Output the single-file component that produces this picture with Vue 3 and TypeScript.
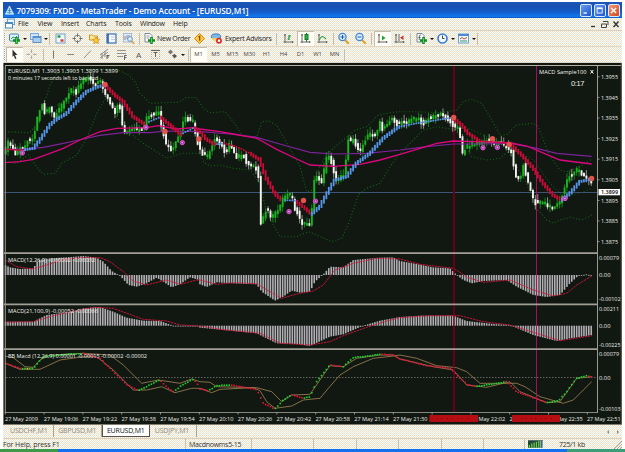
<script setup lang="ts">
type Pt = [number, number]
type Item = { kind: 'icon' | 'text' | 'sep' | 'tf'; w: number; icon?: string; text?: string; on?: boolean }

const menus = ['File', 'View', 'Insert', 'Charts', 'Tools', 'Window', 'Help']

const drop = '<path d="M17 8h4l-2 2z" fill="#111"/>'
const plus = '<path d="M10.5 7v7M7 10.5h7" stroke="#158a25" stroke-width="2.6"/><path d="M10.5 8v5" stroke="#4fd05a" stroke-width="1"/>'
const axes = '<path d="M5 4v9M3.500 12h10" stroke="#666" fill="none"/><path d="M4 5h2M12.500 11v2" stroke="#666"/>'
const icons: Record<string, string> = {
  newChart: '<rect x="3.500" y="4" width="9" height="7" rx="1" fill="#d8efff" stroke="#4a86a8"/><path d="M5 9l2-2 2 1 2-2" stroke="#3a9a50" fill="none"/>' + plus + drop,
  profiles: '<rect x="3.500" y="3.500" width="8" height="6" fill="#cfe6fa" stroke="#7ba6d2"/><rect x="6" y="6.500" width="8" height="6" fill="#a8cdf2" stroke="#5b90c6"/><path d="M6 7.500h8" stroke="#5b90c6"/>' + drop,
  market: '<rect x="4" y="4" width="9" height="9" fill="#eef7ff" stroke="#78a0c0"/><path d="M5.500 6.500h3" stroke="#2a9a3c" stroke-width="2.400"/><path d="M8.500 10.500h3" stroke="#d04030" stroke-width="2.400"/>',
  target: '<circle cx="8.500" cy="8.500" r="3.300" fill="none" stroke="#888"/><path d="M8.500 3.500v3.200M8.500 10.300v3.200M3.500 8.500h3.200M10.300 8.500h3.200" stroke="#666"/>',
  folder: '<path d="M3.500 5h3l1 1h4v4h-8z" fill="#ffe79a" stroke="#c99a28"/><path d="M10 7l1.300 2 2.400.4-1.700 1.700.4 2.400-2.400-1-2.300 1 .5-2.400-1.700-1.700 2.300-.4z" fill="#ffc62d" stroke="#b97a10" stroke-width=".6"/>',
  terminal: '<rect x="4" y="4" width="9" height="9" fill="#f3f9ff" stroke="#3b6fb5" stroke-width="1.200"/><path d="M5 4v9" stroke="#2b5dae" stroke-width="1.600"/><path d="M8 7h4M8 9.500h4" stroke="#ccd"/>',
  tester: '<rect x="3.500" y="3.500" width="8" height="8.500" fill="#e4eefa" stroke="#a5b9d0"/><path d="M5 10V6M7 9V5M9 8V5" stroke="#88a"/><circle cx="10" cy="9" r="2.400" fill="#d6f0ff" stroke="#6f92bd"/><path d="M11.700 11l2.600 2.700" stroke="#d0a040" stroke-width="1.500"/>',
  order: '<path d="M4 3.500h5l2 2V12H4z" fill="#fbfdff" stroke="#7c8aa0"/><path d="M5.500 6h3M5.500 8h3" stroke="#99a"/>' + plus,
  editor: '<path d="M8.500 3.500l5 5-5 5-5-5z" fill="#ffc94a" stroke="#d78a14"/><path d="M7.500 7l1.200-.7V10.800" stroke="#7a4300" stroke-width="1.200" fill="none"/>',
  expert: '<ellipse cx="8" cy="6.500" rx="4.700" ry="2.600" fill="#7eb8e8" stroke="#3a75ad"/><path d="M4 8c1 4 5 4 8 0z" fill="#f2cf5a"/><circle cx="11" cy="10.700" r="2.900" fill="#d82020"/><rect x="9.800" y="9.500" width="2.400" height="2.400" fill="#fff"/>',
  bars: axes + '<path d="M9 5v5M7.500 9H9M9 6h2" stroke="#18943a" stroke-width="1.200"/>',
  candles: axes + '<path d="M9.500 3v9" stroke="#127a24"/><rect x="8" y="4.500" width="3" height="5" fill="#2db14a" stroke="#127a24"/>',
  line: axes + '<path d="M5 10c3-5 4-4 7-1" stroke="#23a044" fill="none" stroke-width="1.200"/>',
  zoomIn: '<path d="M10 10l3.800 3.800" stroke="#dba52e" stroke-width="2.200"/><circle cx="7.500" cy="7" r="3.600" fill="#d8efff" stroke="#4787d0" stroke-width="1.300"/><path d="M5.500 7h4M7.500 5v4" stroke="#245da5"/>',
  zoomOut: '<path d="M10 10l3.800 3.800" stroke="#dba52e" stroke-width="2.200"/><circle cx="7.500" cy="7" r="3.600" fill="#d8efff" stroke="#4787d0" stroke-width="1.300"/><path d="M5.500 7h4" stroke="#245da5"/>',
  scroll: axes + '<path d="M8 5.500v5l3.500-2.500z" fill="#1ba63a"/>',
  shift: axes + '<path d="M8 4v7" stroke="#666"/><path d="M12.500 5.500v4.500l-3.500-2.200z" fill="#c62f2f"/>',
  indicators: '<path d="M4 3.500h5l2 2V12H4z" fill="#f4fbff" stroke="#7c8a90"/><path d="M7.800 5c-1.500-.5-1.500 1-1.500 5M5.500 7.500h2" stroke="#445" fill="none" stroke-width=".8"/>' + plus + drop,
  clock: '<circle cx="8.500" cy="8.500" r="4.500" fill="#f3faff" stroke="#3f7fd0" stroke-width="1.700"/><path d="M8.500 5.500v3h2" stroke="#444" fill="none"/>' + drop,
  template: '<rect x="3.500" y="4" width="10" height="9" fill="#eaf6ff" stroke="#6f9fd2"/><path d="M3 5h11" stroke="#4f8ad0" stroke-width="2"/><path d="M5 9l2-1.500L9 9l3-1.500" stroke="#c05030" fill="none"/><path d="M5 11h7" stroke="#3a9a50"/>' + drop,
  cursor: '<path d="M6.500 3.500l5 5.500H9l1.500 3.500-1.500.5L7.800 9.500 6.500 11z" fill="#333"/>',
  cross: '<path d="M8.500 3.500v3.500M8.500 9.500V13M3.500 8.300H7M10 8.300h3.500" stroke="#aaa" stroke-width="1.200"/>',
  vline: '<path d="M8.500 4.500v8" stroke="#777"/>',
  hline: '<path d="M5 8.500h7" stroke="#888"/>',
  trend: '<path d="M5 12l7-7.500" stroke="#888"/>',
  channel: '<path d="M4 9l8-6M4 12l8-6M6 13V7M9 11V5" stroke="#777" stroke-width=".8"/><path d="M11 13v-4M11 9.500h2.500M11 11h2" stroke="#555" stroke-width=".9"/>',
  fibo: '<path d="M4 4.500h9M4 7.500h9M4 10.500h6" stroke="#888" stroke-width=".9"/><path d="M11.500 14v-4.500h2.300M11.500 11.500h2" stroke="#555" fill="none" stroke-width=".9"/>',
  textA: '<text x="8.500" y="11.600" font-family="Liberation Sans" font-size="8" text-anchor="middle" fill="#555">A</text>',
  label: '<rect x="4.500" y="4" width="8" height="8.500" fill="none" stroke="#aaa" stroke-dasharray="1 1"/><path d="M4 4.500h9M6.500 6.500h4M8.500 6.500V11" stroke="#666"/>',
  arrows: '<path d="M4 6l2.500-2.500L9 6 6.500 8.500z" fill="#777"/><path d="M8 9.500l2.500-1.500L13 10l-2.500 2.500z" fill="#555"/>' + drop,
}

const I = (icon: string, w = 17, on = false): Item => ({ kind: 'icon', icon, w, on })
const S = (w: number): Item => ({ kind: 'sep', w })
const T = (text: string, w: number): Item => ({ kind: 'text', text, w })
const bar1: Item[] = [
  I('newChart', 20.5), I('profiles', 21), S(4.5), I('market'), I('target'), I('folder'), I('terminal'), I('tester'), S(4),
  I('order', 16), T('New Order', 34), I('editor'), I('expert'), T('Expert Advisors', 47.5), S(7.5),
  I('bars'), I('candles', 17, true), I('line'), S(4), I('zoomIn'), I('zoomOut'), S(5), I('scroll', 17, true), I('shift'), S(4.5),
  I('indicators', 21), I('clock', 21), I('template', 21), S(4),
]
const bar2: Item[] = [
  I('cursor', 17, true), I('cross', 18), S(4), I('vline'), I('hline'), I('trend'), I('channel'), I('fibo'), I('textA'), I('label'), I('arrows', 22), S(4),
  ...['M1', 'M5', 'M15', 'M30', 'H1', 'H4', 'D1', 'W1', 'MN'].map((t, i): Item => ({ kind: 'tf', text: t, w: 17, on: i === 0 })), S(2),
]

/* Curves are stored as flat x,y lists in thirds of a pixel from a panel origin. */
const tr = (ox: number, oy: number, s: string): Pt[] =>
  s.split(' ').map((p) => {
    const [x, y] = p.split(',').map(Number)
    return [ox + x / 3, oy + y / 3]
  })
const main = (a: string, b: string, c: string) => [...tr(0, 60, a), ...tr(200, 60, b), ...tr(400, 60, c)]
const sub = (a: string, b: string, c: string) => [...tr(0, 245, a), ...tr(200, 245, b), ...tr(400, 245, c)]
const line = (p: Pt[]) => p.map(([x, y]) => x.toFixed(1) + ',' + y.toFixed(1)).join(' ')

const at = (pts: Pt[], x: number) => {
  if (x <= pts[0][0]) return pts[0][1]
  for (let i = 1; i < pts.length; i++) {
    const [x1, y1] = pts[i]
    if (x <= x1) {
      const [x0, y0] = pts[i - 1]
      return x1 === x0 ? y1 : y0 + ((y1 - y0) * (x - x0)) / (x1 - x0)
    }
  }
  return pts[pts.length - 1][1]
}

const STEP = 2.43
const xs = Array.from({ length: 242 }, (_, i) => 5.6 + i * STEP)
const rnd = (i: number, k: number) => {
  const v = Math.sin(i * 12.9898 + k * 78.233) * 43758.5453
  return v - Math.floor(v)
}

const price = main(
  '15,285 20,245 35,262 50,285 58,262 70,272 80,245 95,240 105,210 113,170 125,130 135,160 148,140 163,172 178,150 190,130 200,110 215,90 228,100 240,75 255,60 270,55 285,75 300,60 306,80 320,115 345,155 358,130 366,190 375,218 392,210 412,210 430,205 442,168 475,155 483,195 497,250 515,272 532,235 545,210 550,175 577,180 590,240 602,277 622,292',
  '20,290 32,265 46,235 60,250 75,278 90,252 110,295 130,285 145,320 165,318 178,355 181,490 190,470 200,445 216,475 240,440 250,412 275,405 283,445 295,465 305,490 328,492 338,430 342,365 350,355 365,370 378,300 390,290 400,340 410,365 430,345 440,290 443,240 460,245 480,278 490,250 510,220 530,232 537,175 548,210 575,175 590,192',
  '2,190 50,175 70,192 90,172 120,165 148,178 160,200 178,208 185,285 200,262 220,250 240,250 260,240 290,250 320,258 335,280 345,355 360,362 370,310 385,375 403,428 430,425 455,447 480,425 495,375 510,345 530,330 545,345 568,358 574,370 577,395',
)
const candles = xs
  .filter((x) => x < 594)
  .map((x, i) => {
    const o = at(price, x - STEP) + (rnd(i, 1) - 0.5) * 4
    const c = at(price, x) + (rnd(i, 2) - 0.5) * 4
    const top = Math.min(o, c) - 1
    const h = Math.max(2.5, Math.abs(o - c) + 1.5)
    return { x, top, h, hi: top - rnd(i, 3) * 6, lo: top + h + rnd(i, 4) * 5, up: c < o }
  })

const slow = main('15,308 60,305 100,298 150,280 190,265 240,240 300,215 350,205 440,203 475,197 530,207 580,203', '0,207 60,215 100,222 170,235 230,268 290,297 330,315 400,319 480,313 540,300', '0,283 60,265 110,250 160,243 330,248 380,258 420,275 480,300 575,312')
const purple = main('15,268 70,268 130,262 190,250 250,237 300,226 370,218 450,218 500,213', '0,215 90,222 170,232 250,255 330,277 400,282 500,280', '0,270 80,260 160,252 240,252 330,250 400,263 470,280 575,289')
const upper = main('15,215 90,218 110,195 130,140 150,75 170,40 250,28 350,28 385,45 405,65 420,100 450,130 535,127 560,112 590,113', '10,145 30,158 75,155 100,185 130,230 170,230 185,185 205,182 230,195 250,230 300,320 320,395 340,390 350,340 375,290 400,265 430,240 465,210 500,200 535,165 570,158', '0,155 50,155 120,158 170,150 190,125 215,118 245,130 270,170 300,225 320,225 350,195 400,190 415,200 430,240 450,290 480,330 500,335 540,320 575,297')
const lower = main('15,305 50,310 85,285 110,320 130,343 165,340 185,310 230,285 260,235 290,160 320,110 345,160 370,205 430,250 500,295 545,280', '0,280 12,308 30,318 60,315 100,325 150,330 180,370 200,460 240,530 290,530 325,515 350,525 395,545 425,535 450,480 475,405 500,385 540,370 570,320', '0,280 40,240 70,210 110,200 170,210 190,250 215,290 260,300 300,295 330,270 350,320 380,370 405,440 440,480 460,490 480,480 510,472 545,480 575,465')
const middle = main('90,215 130,165 180,130 220,95 260,60', '100,250 180,300 250,370 330,420', '170,190 215,210 300,245 400,300 450,370 490,410 540,400 575,385')
const middleParts = [middle.slice(0, 5), middle.slice(9)]

const ribbonData: { c: 'up' | 'dn'; thin?: boolean; p: Pt[] }[] = [
  { c: 'dn', thin: true, p: tr(0, 60, '15,268 70,271') },
  { c: 'up', p: tr(0, 60, '70,270 100,265 120,240 150,195 170,178 200,160 230,125 260,95 290,82 312,75') },
  { c: 'dn', p: tr(0, 60, '315,75 345,105 370,125 400,170 438,195') },
  { c: 'up', thin: true, p: tr(0, 60, '440,188 480,172') },
  { c: 'dn', p: tr(0, 60, '482,172 510,195 545,225') },
  { c: 'up', thin: true, p: tr(0, 60, '545,222 582,203') },
  { c: 'dn', p: tr(0, 60, '582,203 600,215 620,238 645,253') },
  { c: 'up', thin: true, p: tr(200, 60, '45,253 72,250') },
  { c: 'dn', thin: true, p: tr(200, 60, '72,250 110,260 150,280') },
  { c: 'dn', p: tr(200, 60, '150,280 180,300 200,355 225,400 245,420') },
  { c: 'up', thin: true, p: tr(200, 60, '248,420 285,422') },
  { c: 'dn', p: tr(200, 60, '285,422 310,440 335,462') },
  { c: 'up', p: tr(200, 60, '335,462 360,440 385,395 405,360 440,350 470,310 510,280 550,235 590,205 600,200') },
  { c: 'up', thin: true, p: tr(400, 60, '0,200 50,190 100,182 155,173') },
  { c: 'dn', p: tr(400, 60, '158,172 185,195 205,220 235,240 245,242') },
  { c: 'dn', thin: true, p: tr(400, 60, '245,243 330,250') },
  { c: 'dn', p: tr(400, 60, '330,250 370,290 400,325 430,370 460,405 485,420') },
  { c: 'up', p: tr(400, 60, '485,420 510,400 540,365 575,357') },
]
const ribbon = ribbonData.flatMap((r) =>
  xs
    .filter((x) => x >= r.p[0][0] && x < r.p[r.p.length - 1][0])
    .map((x) => {
      const slope = Math.abs(at(r.p, x + 1.2) - at(r.p, x - 1.2))
      const h = r.thin ? 1.6 : 2.4 + slope * 1.3
      return { x, y: at(r.p, x) - h / 2, h, c: r.c }
    }),
)

const redDots: Pt[] = [[105, 84.5], [165, 131.5], [199, 139], [303.5, 200.5], [453.7, 117.5], [492.5, 138.6], [509, 144.6], [591.6, 178.5]]
const pinkDots: Pt[] = [[22.3, 153], [146, 127.4], [182.3, 142.6], [289, 211.6], [315.5, 201.2], [483, 147.8], [497.4, 147.4], [565, 198.5]]

const hist = (p: Pt[], zero: number) =>
  xs.filter((x) => x < 594).map((x) => {
    const y = at(p, x)
    return { x, y: Math.min(y, zero), h: Math.max(0.8, Math.abs(y - zero)) }
  })
const h1 = hist(sub('15,60 30,67 60,72 100,70 115,45 150,40 200,37 250,33 290,38 310,50 335,78 360,92 385,120 410,125 440,115 470,98 490,110 515,127 540,118 570,97 597,105', '0,118 20,126 50,112 100,115 170,118 185,140 225,167 250,155 275,137 300,143 330,140 345,110 370,88 390,65 430,67 460,45 540,38 580,37', '0,48 50,57 100,67 150,70 170,90 190,105 215,115 250,108 320,105 350,125 400,150 440,156 480,150 510,115 535,92 560,88 577,92'), 275)
const s1 = sub('15,45 50,65 100,72 140,60 190,43 250,38 300,38 330,50 370,80 400,108 440,120 500,105 540,118 590,105', '0,105 50,118 100,113 170,116 210,140 245,160 290,147 340,138 370,120 405,75 460,55 530,40', '0,42 60,58 160,70 205,98 250,112 330,105 400,135 460,153 500,145 530,120 577,92')
const h2 = hist(sub('15,230 100,230 140,210 200,202 250,190 300,186 340,200 380,218 430,227 480,228 520,242 590,243', '0,248 60,254 170,265 230,295 290,297 330,303 390,275 430,268 490,242 540,227', '0,216 60,212 160,212 200,228 280,237 330,240 400,270 470,288 510,280 577,270'), 325.7)
const s2 = sub('15,232 100,230 160,212 240,195 280,187 340,190 380,205 430,223 500,228 540,240', '0,243 60,253 180,265 240,295 330,300 390,290 430,272 500,247 560,228', '0,218 90,212 180,212 250,230 330,240 400,262 480,287 577,272')
const bb = sub('15,355 60,370 100,370 130,335 200,328 250,325 300,340 330,370 380,418 415,437 440,425 480,405 500,425 520,440 545,422 580,402 597,422', '0,432 25,437 50,422 90,420 170,433 190,475 225,492 250,465 275,450 310,460 330,455 350,410 390,360 430,365 460,338 540,328 580,330', '0,342 80,362 150,370 200,418 230,425 320,410 350,440 400,458 440,473 475,468 500,440 530,400 560,392 577,397')
const bbDots = xs.filter((x) => x < 594).map((x, i) => {
  const y = at(bb, x)
  const d = at(bb, x + 1) - at(bb, x - 1)
  return { x, y: y + (rnd(i, 5) - 0.5) * 0.6, c: Math.abs(d) < 0.06 && i % 3 === 0 ? 'ye' : d <= 0 ? 'gr' : 're' }
})
const bbA = sub('15,333 40,338 75,365 100,367 120,345 150,330 250,325 330,330 370,360 425,415 475,405 540,415 575,402', '0,410 30,412 50,425 170,428 215,440 245,470 275,450 330,448 370,390 390,362 430,365 470,340 540,330 580,330', '0,342 100,365 160,375 200,420 260,427 330,410 360,440 440,473 480,470 505,435 530,400 577,395')
const bbB = sub('15,355 60,373 120,373 180,345 250,335 290,335 340,375 400,435 440,435 485,425 525,443 575,430', '0,430 35,443 60,433 160,428 180,437 200,470 225,490 275,483 310,465 360,460 385,430 420,390 460,365 520,340 580,333', '0,330 50,340 110,362 170,368 200,380 240,415 350,415 375,425 420,455 490,475 520,465 550,435 575,410')

const prices = ['1.3955', '1.3945', '1.3935', '1.3925', '1.3915', '1.3905', '1.3895', '1.3885', '1.3875'].map((t, i) => ({ t, y: 76.8 + i * 20.6 }))
const scale = [
  { t: '0.00079', y: 258, w: 20 }, { t: '0.00', y: 275, w: 11.5 }, { t: '-0.00102', y: 299, w: 21.5 },
  { t: '0.00211', y: 308.5, w: 20 }, { t: '0.00', y: 325.8, w: 11.5 }, { t: '-0.00225', y: 344.5, w: 21.5 },
  { t: '0.00079', y: 354, w: 20 }, { t: '0.00', y: 377.3, w: 11.5 }, { t: '-0.00103', y: 408.8, w: 21.5 },
]
const times = ['2009', '19:06', '19:22', '19:38', '19:54', '20:10', '20:26', '20:42', '20:58', '21:14', '21:30', '21:46', '22:02', '22:18', '22:35', '22:51'].map((t, i) => ({ t: '27 May ' + t, x: 5 + i * 38.8, w: i === 15 ? 33.5 : i ? 34.5 : 33 }))
const notes = [
  { t: 'EURUSD,M1  1.3903 1.3903 1.3899 1.3899', x: 8, y: 73.4, w: 110 },
  { t: '0 minutes 17 seconds left to bar end', x: 8, y: 79.6, w: 90 },
  { t: 'MACD(12,26,9) -0.00002 -0.00002', x: 8, y: 261.8, w: 87 },
  { t: 'MACD(21,100,9) -0.00052 -0.00066', x: 8, y: 312.8, w: 90 },
  { t: 'BB Macd (12,26,9) 0.00001 -0.00015 -0.00002 -0.00002', x: 8, y: 358.2, w: 139 },
  { t: 'MACD Sample100', x: 539, y: 73.6, w: 47.5 },
]
const tabs = ['USDCHF,M1', 'GBPUSD,M1', 'EURUSD,M1', 'USDJPY,M1']
</script>

<template>
  <div class="screen">
    <div class="window">
      <header class="title">
        <svg class="logo" viewBox="0 0 12 12"><path d="M6 1l4.500 9h-9z" fill="#bfe6f8" stroke="#e9faff" stroke-width=".7" /><path d="M6 3v6M3.500 8.500h5M4 6h4" stroke="#2a87c4" stroke-width=".9" /></svg>
        <span class="caption">7079309: FXDD - MetaTrader - Demo Account - [EURUSD,M1]</span>
        <div class="controls">
          <span class="ctl"><svg viewBox="0 0 11 13"><path d="M3 9.500h4" stroke="#fff" stroke-width="1.600" /></svg></span>
          <span class="ctl"><svg viewBox="0 0 11 13"><rect x="2.500" y="3.500" width="6" height="6" fill="none" stroke="#fff" /><path d="M2.500 4h6" stroke="#fff" stroke-width="1.600" /></svg></span>
          <span class="ctl close"><svg viewBox="0 0 11 13"><path d="M2.500 3.500l6 6M8.500 3.500l-6 6" stroke="#fff" stroke-width="1.500" /></svg></span>
        </div>
      </header>

      <nav class="menu">
        <svg class="doc" viewBox="0 0 12 12"><rect x="3.500" y="1" width="7" height="5.500" fill="#e6f3fc" stroke="#6c9fc4" /><rect x="1.500" y="4.500" width="7" height="5.500" fill="#f7fcff" stroke="#4d8ab8" /><path d="M1.500 5.500h7" stroke="#4d8ab8" /></svg>
        <span v-for="m in menus" :key="m" class="mi" :class="'m-' + m.toLowerCase()">{{ m }}</span>
        <svg class="mdi" viewBox="0 0 34 10"><path d="M4 7.500h4" stroke="#333" stroke-width="1.300" /><path d="M16 2.500h5v3.500M14.500 5h5v3.500h-5z" stroke="#444" fill="none" /><path d="M26.500 2.500l5 5.500M31.500 2.500l-5 5.500" stroke="#333" stroke-width="1.400" /></svg>
      </nav>

      <div v-for="(bar, b) in [bar1, bar2]" :key="b" class="bar">
        <i class="grip"></i>
        <div v-for="(it, i) in bar" :key="i" class="cell" :class="[it.kind, { on: it.on }]" :style="{ width: it.w + 'px' }">
          <svg v-if="it.kind === 'icon'" class="ic" viewBox="0 0 21 17" v-html="icons[it.icon!]"></svg>
          <template v-else>{{ it.text }}</template>
        </div>
      </div>

      <main class="chart">
        <svg viewBox="3 63 619 361" width="619" height="361">
          <rect x="3" y="63" width="619" height="361" fill="#111711" />
          <path d="M3.500 63v361" stroke="#77756b" />
          <path d="M5 65.500h616" stroke="#b5b19e" />
          <path d="M621.300 63v361" stroke="#6b6c66" />

          <g shape-rendering="crispEdges">
            <path d="M4 192.500H597" stroke="#3d5478" />
            <path d="M454 66V412" stroke="#650019" stroke-width="2" />
            <path d="M536.500 66V412" stroke="#a90d5d" />
          </g>

          <polyline class="band" :points="line(upper)" />
          <polyline class="band" :points="line(lower)" />
          <polyline v-for="(m, i) in middleParts" :key="'m' + i" class="band faint" :points="line(m)" />

          <g v-for="(c, i) in candles" :key="'c' + i" :class="c.up ? 'bull' : 'bear'">
            <rect class="wick" :x="c.x - 0.5" :y="c.hi" width="1" :height="c.lo - c.hi" />
            <rect class="body" :x="c.x - 0.9" :y="c.top" width="1.9" :height="c.h" />
          </g>
          <polyline :points="line(purple)" fill="none" stroke="#7c2399" stroke-width="1.200" />
          <polyline :points="line(slow)" fill="none" stroke="#dc087e" stroke-width="1.300" />
          <rect v-for="(r, i) in ribbon" :key="'r' + i" :class="r.c" :x="r.x - 0.9" :y="r.y" width="1.800" :height="r.h" />
          <circle v-for="(d, i) in redDots" :key="'d' + i" :cx="d[0]" :cy="d[1]" r="2.700" fill="#e2544a" />
          <g v-for="(d, i) in pinkDots" :key="'p' + i">
            <circle :cx="d[0]" :cy="d[1]" r="2.200" fill="#a040a4" stroke="#d557cc" stroke-width="1" />
            <circle :cx="d[0]" :cy="d[1]" r=".8" fill="#f4a0f0" />
          </g>

          <rect v-for="(h, i) in h1" :key="'h' + i" class="hist" :x="h.x - 0.8" :y="h.y" width="1.600" :height="h.h" />
          <polyline class="signal" :points="line(s1)" />
          <rect v-for="(h, i) in h2" :key="'g' + i" class="hist" :x="h.x - 0.8" :y="h.y" width="1.600" :height="h.h" />
          <polyline class="signal" :points="line(s2)" />
          <path d="M6 377.500H597" stroke="#777b74" stroke-width=".8" stroke-dasharray="1.500 1.500" />
          <polyline class="bb" :points="line(bbA)" />
          <polyline class="bb" :points="line(bbB)" />
          <rect v-for="(d, i) in bbDots" :key="'b' + i" :class="d.c" :x="d.x - 0.8" :y="d.y - 0.8" width="1.600" height="1.600" />
          <path d="M454 254V412" stroke="#650019" stroke-width="2" opacity=".55" />
          <path d="M536.500 254V412" stroke="#a90d5d" opacity=".8" />

          <g stroke="#a09e95">
            <path d="M4 253.200H597M4 304.300H597M4 349.200H597" stroke-width="1.700" />
            <path d="M5 412.500H597" stroke="#85867f" />
            <path d="M5.300 66V413M597.500 66V413" stroke="#9b9b92" />
            <path v-for="p in prices" :key="p.t" :d="'M597 ' + p.y + 'h2.500'" stroke-width=".9" />
            <path v-for="t in times" :key="t.t" :d="'M' + (t.x + 0.3) + ' 412v2.500'" stroke-width=".9" />
          </g>

          <g class="lbl">
            <text v-for="p in prices" :key="p.t" x="601" :y="p.y + 2.2" textLength="17" lengthAdjust="spacingAndGlyphs">{{ p.t }}</text>
            <text v-for="(s, i) in scale" :key="'s' + i" x="599" :y="s.y + 2.2" :textLength="s.w" lengthAdjust="spacingAndGlyphs">{{ s.t }}</text>
            <text v-for="n in notes" :key="n.t" class="note" :x="n.x" :y="n.y" :textLength="n.w" lengthAdjust="spacingAndGlyphs">{{ n.t }}</text>
            <text v-for="t in times" :key="t.t" :x="t.x" y="420.800" :textLength="t.w" lengthAdjust="spacingAndGlyphs">{{ t.t }}</text>
            <text x="571" y="85.500" class="big" textLength="13.500">0:17</text>
          </g>
          <path d="M590.500 70l2.800 3.500M593.300 70l-2.800 3.500" stroke="#fff" />
          <rect x="598.500" y="189" width="21.500" height="6.300" fill="#fff" />
          <text x="601" y="194.400" class="now" textLength="17" lengthAdjust="spacingAndGlyphs">1.3899</text>
          <rect x="429.300" y="415" width="48.700" height="7" fill="#b50d12" />
          <rect x="512" y="415" width="48" height="7" fill="#b50d12" />
          <path d="M437 418.500h32M521 418.500h32" stroke="#4a0508" stroke-width=".8" stroke-dasharray="1 3 1 5" />
        </svg>
      </main>

      <div class="tabs">
        <span v-for="t in tabs" :key="t" class="tab" :class="{ active: t === 'EURUSD,M1' }">{{ t }}</span>
        <span class="arrows"><svg viewBox="0 0 14 6"><path d="M3 1v4L1 3zM11 1v4L13 3z" fill="#888" /></svg></span>
      </div>

      <footer class="status">
        <span class="help">For Help, press F1</span>
        <span class="profile">Macdnowms5-15</span>
        <i></i><i></i><i></i><i></i><i></i><i></i>
        <span class="net">
          <svg viewBox="0 0 16 8"><rect width="16" height="8" fill="#23483a" /><path d="M1.500 8V5M4 8V3.500M6.500 8V2.500M9 8V1.500M11.500 8V.5" stroke="#6ad04a" stroke-width="1.300" /><path d="M13.500 8V.5M15.300 8V.5" stroke="#b0cce0" stroke-width=".9" /></svg>
          <span class="kb">725/1 kb</span>
        </span>
        <svg class="size" viewBox="0 0 10 10"><path d="M2 10l8-8M5 10l5-5M8 10l2-2" stroke="#a9a595" /></svg>
      </footer>
    </div>
    <div class="taskbar"><b></b><em></em><u></u></div>
  </div>
</template>

<style>
body { margin: 0; background: #fff; }
</style>

<style scoped>
.screen {
  width: 625px; height: 452px; box-sizing: border-box; padding-top: 2px; overflow: hidden;
  display: flex; flex-direction: column; background: #fff;
  font-family: "Open Sans", "Noto Sans", "Liberation Sans", sans-serif; color: #222;
}
.window {
  width: 619px; height: 447px; margin-left: 3px; display: flex; flex-direction: column;
  background: conic-gradient(#fffaf0 25%, #efdcb8 0 50%, #fffcf4 0 75%, #dde9e8 0) 0 0 / 2px 2px;
}
.title {
  height: 16px; flex: none; display: flex; align-items: center; box-sizing: border-box; padding: 0 2px 0 1px;
  background: linear-gradient(#1d56b4, #1651b3 35%, #1460cd 65%, #1277ee 90%, #0d55bd);
}
.logo { width: 11px; height: 11px; }
.caption {
  margin-left: 1.5px; color: #fff; font-weight: 600; font-size: 8.3px; line-height: 15px; white-space: pre;
  letter-spacing: -0.13px;
}
.controls { margin-left: auto; display: flex; gap: 2px; }
.ctl { width: 12px; height: 13px; border: 0.5px solid #d8e8ff; border-radius: 2px; box-sizing: border-box; background: linear-gradient(135deg, #6b9cf0, #1b54d0); display: flex; }
.ctl.close { background: linear-gradient(135deg, #f29a78, #d34518); }
.menu { height: 13px; flex: none; display: flex; align-items: center; font-size: 7px; line-height: 12px; border-bottom: 1px solid #d9d3c7; box-sizing: border-box; }
.doc { width: 12px; height: 12px; margin-left: 1px; }
.mi { white-space: pre; letter-spacing: -0.15px; flex: none; }
.m-file { margin-left: 2px; width: 19.5px; }
.m-view { width: 23.5px; }
.m-insert { width: 25px; }
.m-charts { width: 29px; }
.m-tools { width: 25px; }
.m-window { width: 33px; letter-spacing: -0.3px; }
.mdi { width: 34px; height: 10px; margin-left: auto; margin-right: 1px; }
.bar { height: 16px; flex: none; display: flex; align-items: center; border-bottom: 1px solid #ded6ca; box-sizing: border-box; font-size: 7px; }
.grip { width: 1px; height: 11px; margin: 0 1px; background: repeating-linear-gradient(#a9a08c 0 1px, transparent 1px 2px); flex: none; }
.cell { height: 15px; flex: none; white-space: nowrap; line-height: 15px; overflow: visible; box-sizing: border-box; letter-spacing: -0.28px; }
.cell.on { background: #fffdf5; box-shadow: inset 0.5px 0.5px 0 0.5px #c4bdac; }
.ic { display: block; width: 21px; height: 17px; margin-top: -1px; }
.cell.sep { display: flex; justify-content: center; align-items: center; }
.cell.sep::before { content: ''; width: 1px; height: 12px; background: #c5bdb2; }
.cell.tf { text-align: center; font-size: 5.8px; color: #444; letter-spacing: 0; }
.chart { height: 361px; flex: none; }
.chart svg { display: block; }
.band { fill: none; stroke: #126516; stroke-width: 1.1; stroke-dasharray: 1.1 2.1; }
.faint { opacity: 0.75; }
.bull .wick { fill: #138219; }
.bull .body { fill: #18b51c; }
.bear .wick { fill: #8d908a; }
.bear .body { fill: #f2f4ee; }
.up { fill: #5596e8; }
.dn { fill: #cd0b36; }
.hist { fill: #b2b0b5; }
.signal { fill: none; stroke: #d0163a; stroke-width: 0.9; stroke-dasharray: 2.5 0.7; }
.bb { fill: none; stroke: #927a4e; stroke-width: 0.9; }
.gr { fill: #1dd32d; }
.re { fill: #e3173a; }
.ye { fill: #e8c92a; }
.lbl { fill: #eceee8; font-size: 6px; font-family: "Open Sans", "Noto Sans", sans-serif; white-space: pre; }
.note { font-size: 5.6px; fill: #f2f4ee; }
.big { font-size: 7.5px; font-family: "Liberation Sans", sans-serif; }
.now { fill: #000; font-size: 6px; font-weight: 600; }
.tabs { height: 14px; flex: none; display: flex; font-size: 7px; line-height: 12px; color: #8d897e; border-top: 1px solid #807d73; box-sizing: border-box; }
.tab { width: 48.5px; height: 12px; text-align: center; box-sizing: border-box; border-right: 1px solid #aaa495; letter-spacing: -0.2px; }
.tab:first-child { width: 50.5px; padding-left: 2px; }
.tab.active { width: 47.5px; background: #fff; color: #111; border: 1px solid #55534c; border-top: 0; }
.tab:nth-child(4) { width: 47px; padding-right: 1px; }
.arrows { margin-left: auto; margin-right: 2px; width: 14px; display: flex; align-items: center; }
.arrows svg { width: 14px; height: 6px; }
.status { height: 11px; flex: none; display: flex; font-size: 7px; line-height: 11px; color: #333; border-top: 1px solid #d6d0c2; box-sizing: border-box; }
.help { width: 182px; border-right: 1px solid #c8c0b2; letter-spacing: -0.1px; }
.profile { width: 62px; padding-left: 3px; border-right: 1px solid #c8c0b2; letter-spacing: -0.27px; }
.status i { width: 42.5px; border-right: 1px solid #c8c0b2; box-sizing: border-box; }
.status i:nth-of-type(1) { width: 62px; }
.status i:nth-of-type(6) { width: 40.5px; }
.net { display: flex; align-items: center; margin-left: 3px; gap: 16.5px; }
.net svg { width: 15px; height: 8px; }
.kb { letter-spacing: -0.3px; }
.size { width: 10px; height: 10px; margin-left: auto; }
.taskbar { height: 3px; flex: none; display: flex; background: #0f72e8; }
.taskbar b { width: 58px; background: #3c9a48; }
.taskbar em { flex: 1; background: #1272ec; }
.taskbar u { width: 58px; background: #3b9e78; }
</style>
